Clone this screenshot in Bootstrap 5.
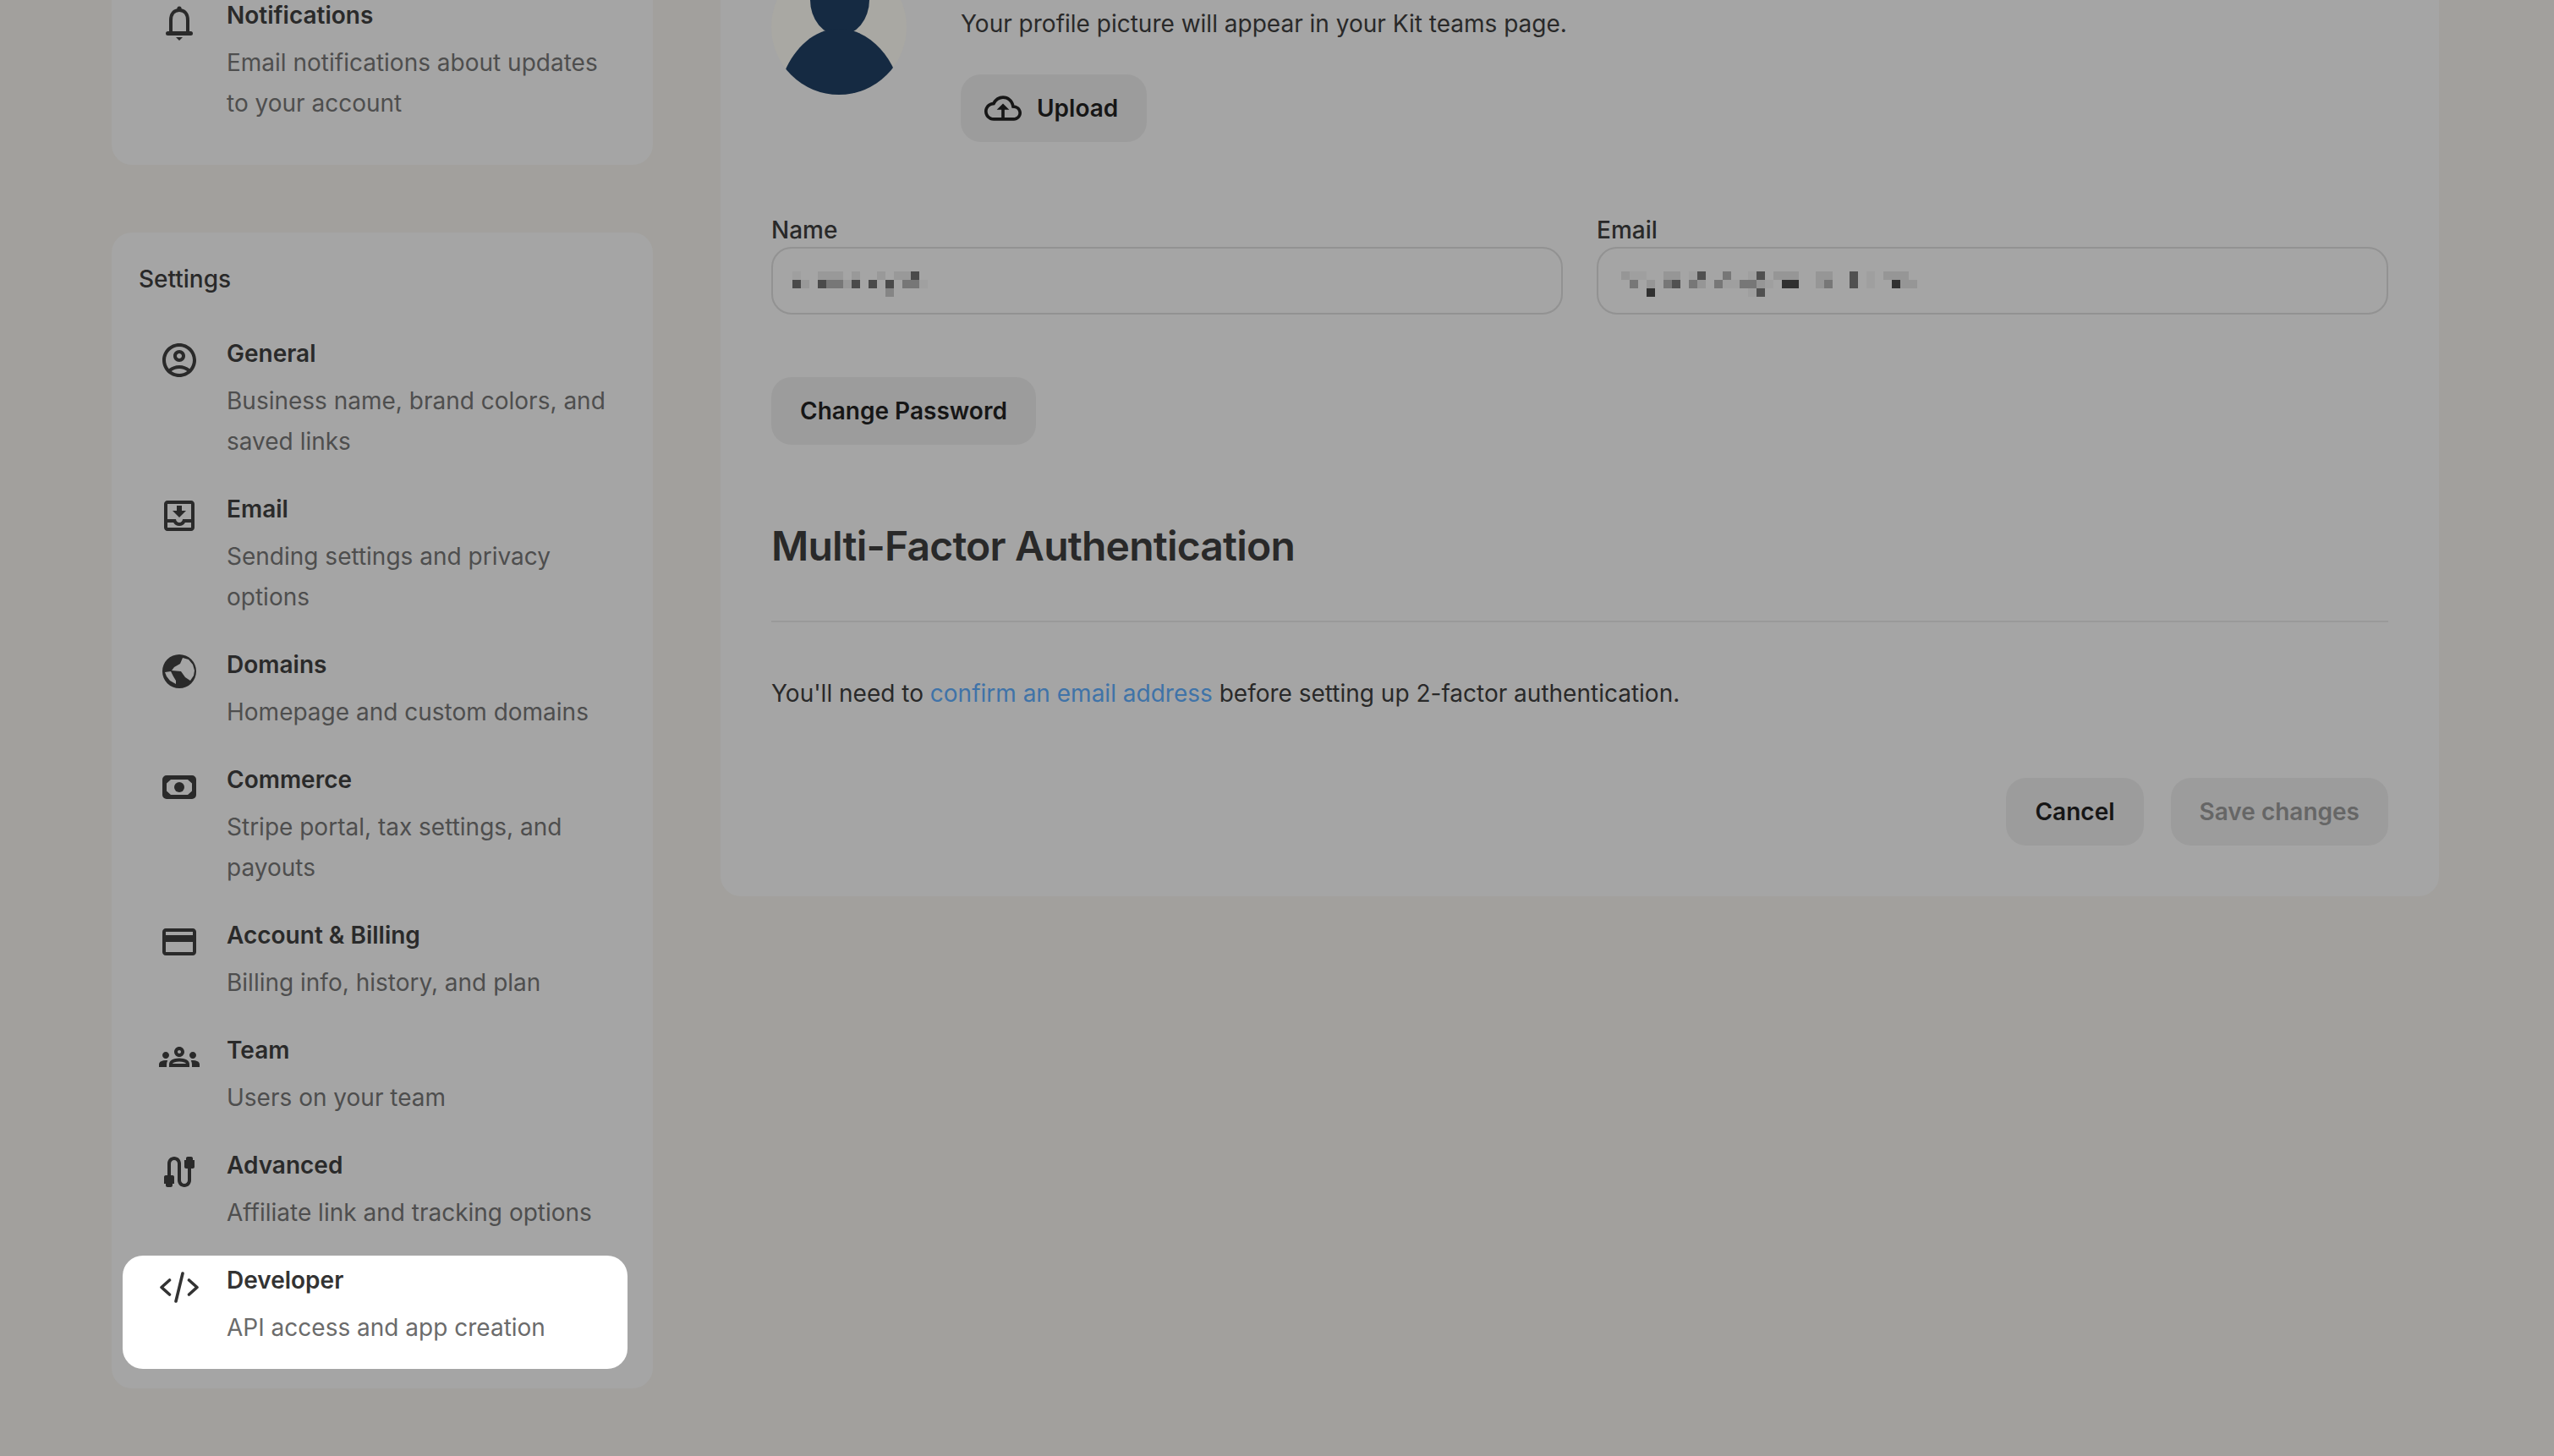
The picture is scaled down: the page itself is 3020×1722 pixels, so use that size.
<!DOCTYPE html>
<html lang="en">
<head>
    <meta charset="UTF-8">
    <title>Kit - Developer settings</title>
    <link href="https://cdn.jsdelivr.net/npm/bootstrap@5.3.0/dist/css/bootstrap.min.css" rel="stylesheet">
    <style>
        html, body { height: 100%; overflow: hidden; }
        body { background: #a2a09d; font-family: Inter, "Noto Sans", sans-serif; font-size: 28px; line-height: 48px; color: #292929; }
        .page-wrap { margin-top: -108px; padding-left: 132px; gap: 80px; }
        .side-col { width: 640px; flex: none; margin-top: 8px; }
        .panel-box { background: #a5a5a5; border-radius: 24px; }
        .panel-notify { padding: 89px 30px 22px 13px; margin-bottom: 80px; }
        .panel-settings { padding: 0 30px 21px 13px; }
        .settings-title { padding: 31px 0 35px 19px; line-height: 48px; font-weight: 500; }
        .set-item { padding: 8px 20px 25px 43px; margin-bottom: 2px; border-radius: 24px; gap: 32px; }
        .set-item svg { width: 48px; height: 48px; flex: none; margin-top: 5px; fill: #2a2a2a; }
        .set-title { font-weight: 600; line-height: 42px; margin-bottom: 11px; color: #2a2a2a; }
        .set-desc { color: #4e4e4e; }
        .set-item.is-active { background: #fff; }
        .is-active .set-title { color: #333; }
        .is-active .set-desc { color: #6b6b6b; }
        .is-active svg { fill: none; stroke: #333; }
        .main-col { width: 2032px; flex: none; padding: 60px; }
        .avatar-pic { width: 160px; height: 160px; flex: none; }
        .avatar-row { gap: 64px; }
        .upload-note { margin-top: 52px; margin-bottom: 36px; line-height: 48px; }
        .soft-btn { background: #9c9c9c; border: 0; border-radius: 24px; height: 80px; padding: 0 34px; font-size: 28px; font-weight: 600; color: #161616; line-height: 80px; }
        .soft-btn:hover, .soft-btn:disabled { background: #9c9c9c; color: #161616; }
        .soft-btn:disabled { color: #666; opacity: 1; }
        .btn-upload { padding-left: 28px; gap: 18px; }
        .btn-upload svg { width: 44px; height: 44px; fill: #161616; }
        .form-fields { --bs-gutter-x: 40px; margin-top: 84px; }
        .field-name { line-height: 40px; font-weight: 500; margin: 0; display: block; }
        .field-box { background: transparent; border: 2px solid #929292; border-radius: 24px; height: 80px; padding: 0 0 0 23px; }
        .field-box svg { margin-top: 7px; }
        .field-email { padding-left: 27px; }
        .btn-password { margin-top: 74px; }
        .mfa-head { font-size: 48px; font-weight: 600; letter-spacing: -0.8px; line-height: 64px; margin: 88px 0 56px; color: #292929; }
        .mfa-rule { border-top: 2px solid #999; opacity: 1; margin: 0 0 60px; }
        .mfa-link { color: #3f73a8; text-decoration: none; }
        .form-actions { margin-top: 76px; gap: 32px; }
    </style>
</head>
<body>
    <div class="d-flex align-items-start page-wrap">

        <!-- sidebar -->
        <div class="side-col">
            <div class="panel-box panel-notify">
                <div class="d-flex set-item">
                    <svg viewBox="0 0 48 48"><circle cx="24" cy="8" r="2.6"/><path d="M14 37V22C14 14 18 10 24 10s10 4 10 12v15" fill="none" stroke="#2a2a2a" stroke-width="4"/><rect x="8" y="35" width="32" height="5" rx="2.5"/><path d="M20 42h8l-4 4z"/></svg>
                    <div>
                        <div class="set-title">Notifications</div>
                        <div class="set-desc">Email notifications about updates to your account</div>
                    </div>
                </div>
            </div>

            <div class="panel-box panel-settings">
                <div class="settings-title">Settings</div>

                <div class="d-flex set-item">
                    <svg viewBox="0 0 24 24"><path d="M12 2C6.48 2 2 6.48 2 12s4.48 10 10 10 10-4.48 10-10S17.52 2 12 2zM7.35 18.5C8.66 17.56 10.26 17 12 17s3.34.56 4.65 1.5C15.34 19.44 13.74 20 12 20s-3.34-.56-4.65-1.5zm10.79-1.38C16.45 15.8 14.32 15 12 15s-4.45.8-6.14 2.12C4.7 15.73 4 13.95 4 12c0-4.42 3.58-8 8-8s8 3.58 8 8c0 1.95-.7 3.73-1.86 5.12z"/><path d="M12 6c-1.93 0-3.5 1.57-3.5 3.5S10.07 13 12 13s3.5-1.57 3.5-3.5S13.93 6 12 6zm0 5c-.83 0-1.5-.67-1.5-1.5S11.17 8 12 8s1.5.67 1.5 1.5S12.83 11 12 11z"/></svg>
                    <div>
                        <div class="set-title">General</div>
                        <div class="set-desc">Business name, brand colors, and saved links</div>
                    </div>
                </div>

                <div class="d-flex set-item">
                    <svg viewBox="0 0 24 24"><path d="M19 3H5c-1.1 0-2 .9-2 2v14c0 1.1.9 2 2 2h14c1.1 0 2-.9 2-2V5c0-1.1-.9-2-2-2zm0 16H5v-3h3.56c.69 1.19 1.97 2 3.45 2s2.75-.81 3.45-2H19v3zm0-5h-4.99c0 1.1-.9 2-2 2s-2-.9-2-2H5V5h14v9zm-3-5h-2.500V6h-3v3H8l4 4 4-4z"/></svg>
                    <div>
                        <div class="set-title">Email</div>
                        <div class="set-desc">Sending settings and privacy options</div>
                    </div>
                </div>

                <div class="d-flex set-item">
                    <svg viewBox="0 0 48 48"><path fill-rule="evenodd" d="M24 4a20 20 0 1 1 0 40 20 20 0 0 1 0-40zM28 8l-3 7-7 4-3 4 11 1 5 7 6 4 4-6 1-6-2-7-5-6zM7 25l7-1 3 6 3 5v4l-7-4-4-5z"/></svg>
                    <div>
                        <div class="set-title">Domains</div>
                        <div class="set-desc">Homepage and custom domains</div>
                    </div>
                </div>

                <div class="d-flex set-item">
                    <svg viewBox="0 0 48 48"><path fill-rule="evenodd" d="M9 11h30a5 5 0 0 1 5 5v18a5 5 0 0 1-5 5H9a5 5 0 0 1-5-5V16a5 5 0 0 1 5-5zm5 5l-5 4.500v9l5 4.500h20l5-4.500v-9l-5-4.500z"/><circle cx="24" cy="25" r="6"/></svg>
                    <div>
                        <div class="set-title">Commerce</div>
                        <div class="set-desc">Stripe portal, tax settings, and payouts</div>
                    </div>
                </div>

                <div class="d-flex set-item">
                    <svg viewBox="0 0 24 24"><path d="M20 4H4c-1.11 0-1.99.89-1.99 2L2 18c0 1.11.89 2 2 2h16c1.11 0 2-.89 2-2V6c0-1.11-.89-2-2-2zm0 14H4v-6h16v6zm0-10H4V6h16v2z"/></svg>
                    <div>
                        <div class="set-title">Account &amp; Billing</div>
                        <div class="set-desc">Billing info, history, and plan</div>
                    </div>
                </div>

                <div class="d-flex set-item">
                    <svg viewBox="0 0 24 24"><path d="M4 13c1.1 0 2-.9 2-2 0-1.1-.9-2-2-2s-2 .9-2 2c0 1.1.9 2 2 2zm1.13 1.100C4.760 14.040 4.390 14 4 14c-.99 0-1.930.21-2.780.58C.48 14.900 0 15.620 0 16.430V18h4.500v-1.610c0-.83.23-1.610.63-2.290zM20 13c1.100 0 2-.9 2-2 0-1.100-.9-2-2-2s-2 .9-2 2c0 1.100.9 2 2 2zm4 3.430c0-.81-.48-1.530-1.220-1.850C21.930 14.210 20.990 14 20 14c-.39 0-.76.04-1.130.1.4.68.63 1.460.63 2.290V18H24v-1.570zM16.240 13.650c-1.170-.52-2.610-.9-4.240-.9-1.630 0-3.070.39-4.240.9C6.680 14.130 6 15.210 6 16.390V18h12v-1.610c0-1.180-.68-2.260-1.760-2.740zM8.070 16c.09-.23.13-.39.91-.69.97-.38 1.990-.56 3.020-.56s2.050.18 3.020.56c.77.3.81.46.91.69H8.070zM12 8c.55 0 1 .45 1 1s-.45 1-1 1-1-.45-1-1 .45-1 1-1m0-2c-1.660 0-3 1.340-3 3s1.340 3 3 3 3-1.340 3-3-1.340-3-3-3z"/></svg>
                    <div>
                        <div class="set-title">Team</div>
                        <div class="set-desc">Users on your team</div>
                    </div>
                </div>

                <div class="d-flex set-item">
                    <svg viewBox="0 0 24 24"><path d="M20 5V4c0-.55-.45-1-1-1h-2c-.55 0-1 .45-1 1v1h-1v4c0 .55.45 1 1 1h1v7c0 1.100-.9 2-2 2s-2-.9-2-2V7c0-2.210-1.790-4-4-4S5 4.790 5 7v7H4c-.55 0-1 .45-1 1v4h1v1c0 .55.45 1 1 1h2c.55 0 1-.45 1-1v-1h1v-4c0-.55-.45-1-1-1H7V7c0-1.100.9-2 2-2s2 .9 2 2v10c0 2.210 1.790 4 4 4s4-1.790 4-4v-7h1c.55 0 1-.45 1-1V5h-1z"/></svg>
                    <div>
                        <div class="set-title">Advanced</div>
                        <div class="set-desc">Affiliate link and tracking options</div>
                    </div>
                </div>

                <div class="d-flex set-item is-active">
                    <svg viewBox="0 0 48 48" stroke-width="3.600" stroke-linecap="round" stroke-linejoin="round"><path d="M12.500 16L3 24.500l9.500 8.500M35.500 16L45 24.500 35.500 33M28 8l-8 33"/></svg>
                    <div>
                        <div class="set-title">Developer</div>
                        <div class="set-desc">API access and app creation</div>
                    </div>
                </div>
            </div>
        </div>

        <!-- profile form -->
        <div class="panel-box main-col">
            <div class="d-flex avatar-row">
                <svg class="avatar-pic" viewBox="0 0 160 160">
                    <defs><clipPath id="avatarClip"><circle cx="80" cy="80" r="80"/></clipPath></defs>
                    <circle cx="80" cy="80" r="80" fill="#a9a8a3"/>
                    <g clip-path="url(#avatarClip)" fill="#152a42">
                        <ellipse cx="81" cy="48" rx="35" ry="42"/>
                        <path d="M80 82C50 82 28 105 16 132V165H146V132C134 105 110 82 80 82Z"/>
                    </g>
                </svg>
                <div>
                    <div class="upload-note">Your profile picture will appear in your Kit teams page.</div>
                    <button class="btn soft-btn btn-upload d-inline-flex align-items-center" type="button">
                        <svg viewBox="0 0 24 24"><path d="M19.350 10.040C18.670 6.590 15.640 4 12 4 9.110 4 6.600 5.640 5.350 8.040 2.340 8.360 0 10.910 0 14c0 3.310 2.690 6 6 6h13c2.760 0 5-2.240 5-5 0-2.640-2.050-4.780-4.650-4.960zM19 18H6c-2.210 0-4-1.790-4-4 0-2.050 1.530-3.760 3.560-3.970l1.070-.11.5-.95C8.080 7.140 9.940 6 12 6c2.620 0 4.880 1.860 5.390 4.430l.3 1.500 1.530.11c1.560.1 2.780 1.410 2.780 2.960 0 1.650-1.350 3-3 3zM8 13h3v5h2v-5h3l-4-4z"/></svg>
                        Upload
                    </button>
                </div>
            </div>

            <div class="row form-fields">
                <div class="col-6">
                    <label class="field-name">Name</label>
                    <div class="form-control field-box d-flex align-items-center">
                        <!-- name is pixelated in the shot -->
                        <svg width="170" height="30" viewBox="0 0 17 3" shape-rendering="crispEdges">
                            <g fill="#9f9f9f"><rect x="0" y="0" width="1" height="1"/></g>
                            <g fill="#999"><rect x="3" y="0" width="3" height="1"/><rect x="7" y="0" width="1" height="1"/><rect x="10" y="0" width="1" height="1"/><rect x="12" y="0" width="2" height="1"/><rect x="1" y="1" width="1" height="1"/><rect x="6" y="1" width="1" height="1"/><rect x="15" y="1" width="1" height="1" fill="#a0a0a0"/></g>
                            <g fill="#777"><rect x="4" y="1" width="2" height="1"/><rect x="13" y="1" width="2" height="1"/><rect x="11" y="2" width="1" height="1" fill="#858585"/></g>
                            <g fill="#4a4a4a"><rect x="14" y="0" width="1" height="1"/><rect x="0" y="1" width="1" height="1"/><rect x="3" y="1" width="1" height="1"/><rect x="7" y="1" width="1" height="1"/><rect x="9" y="1" width="1" height="1"/><rect x="11" y="1" width="1" height="1"/></g>
                        </svg>
                    </div>
                </div>
                <div class="col-6">
                    <label class="field-name">Email</label>
                    <div class="form-control field-box field-email d-flex align-items-center">
                        <svg width="350" height="30" viewBox="0 0 35 3" shape-rendering="crispEdges">
                            <g fill="#9f9f9f"><rect x="1" y="0" width="2" height="1"/><rect x="8" y="0" width="1" height="1"/><rect x="15" y="0" width="1" height="1"/><rect x="29" y="0" width="1" height="1"/><rect x="12" y="1" width="2" height="1"/><rect x="17" y="1" width="1" height="1"/><rect x="29" y="1" width="1" height="1"/><rect x="15" y="2" width="1" height="1"/></g>
                            <g fill="#969696"><rect x="0" y="0" width="1" height="1"/><rect x="5" y="0" width="2" height="1"/><rect x="18" y="0" width="3" height="1"/><rect x="23" y="0" width="2" height="1"/><rect x="31" y="0" width="3" height="1"/><rect x="3" y="1" width="1" height="1"/><rect x="9" y="1" width="1" height="1"/><rect x="16" y="1" width="1" height="1"/><rect x="23" y="1" width="1" height="1"/><rect x="33" y="1" width="2" height="1"/></g>
                            <g fill="#777"><rect x="12" y="0" width="1" height="1"/><rect x="1" y="1" width="1" height="1"/><rect x="5" y="1" width="1" height="1"/><rect x="8" y="1" width="1" height="1"/><rect x="11" y="1" width="1" height="1"/><rect x="14" y="1" width="2" height="1"/><rect x="24" y="1" width="1" height="1"/></g>
                            <g fill="#505050"><rect x="9" y="0" width="1" height="1"/><rect x="16" y="0" width="1" height="1"/><rect x="27" y="0" width="1" height="2"/><rect x="6" y="1" width="1" height="1"/><rect x="16" y="2" width="1" height="1"/></g>
                            <g fill="#303030"><rect x="19" y="1" width="2" height="1"/><rect x="32" y="1" width="1" height="1"/><rect x="3" y="2" width="1" height="1"/></g>
                        </svg>
                    </div>
                </div>
            </div>

            <button class="btn soft-btn btn-password" type="button">Change Password</button>

            <h2 class="mfa-head">Multi-Factor Authentication</h2>
            <hr class="mfa-rule">
            <div>You'll need to <a class="mfa-link" href="#">confirm an email address</a> before setting up 2-factor authentication.</div>

            <div class="d-flex justify-content-end form-actions">
                <button class="btn soft-btn" type="button">Cancel</button>
                <button class="btn soft-btn" type="button" disabled>Save changes</button>
            </div>
        </div>
    </div>

    <script src="https://cdn.jsdelivr.net/npm/bootstrap@5.3.0/dist/js/bootstrap.bundle.min.js"></script>
</body>
</html>
